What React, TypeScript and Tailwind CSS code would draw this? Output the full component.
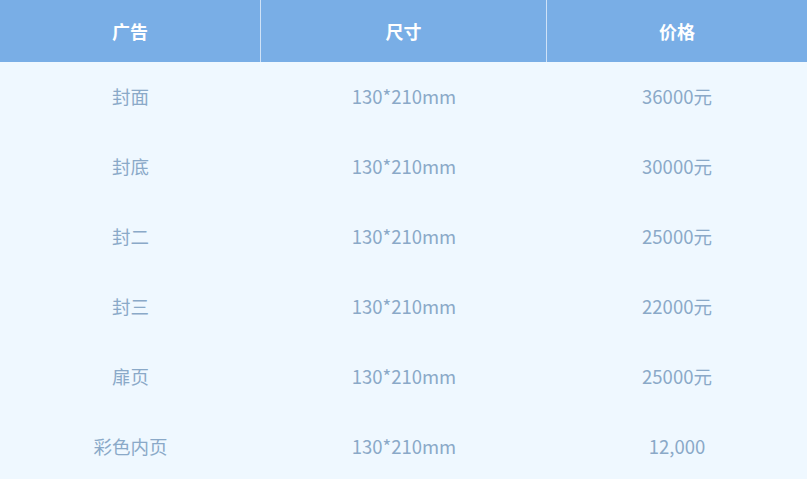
import React from "react";

const rows = [
  ["封面", "130*210mm", "36000元"],
  ["封底", "130*210mm", "30000元"],
  ["封二", "130*210mm", "25000元"],
  ["封三", "130*210mm", "22000元"],
  ["扉页", "130*210mm", "25000元"],
  ["彩色内页", "130*210mm", "12,000"],
];

export default function App() {
  return (
    <div
      className="w-[807px] h-[479px] bg-[#eff8ff] overflow-hidden"
      style={{ fontFamily: '"Noto Sans CJK SC", "Noto Sans", sans-serif' }}
    >
      <div className="grid grid-cols-[260px_1px_285px_1px_260px] h-[62px] bg-[#79aee6] text-white font-bold text-[18px]">
        <div className="flex items-center justify-center">广告</div>
        <div className="bg-[#cfe2f7]" />
        <div className="flex items-center justify-center">尺寸</div>
        <div className="bg-[#cfe2f7]" />
        <div className="flex items-center justify-center">价格</div>
      </div>
      {rows.map((r, i) => (
        <div
          key={i}
          className="grid grid-cols-[261px_286px_260px] h-[70px] text-[#8aa9c8] text-[18.5px]"
        >
          {r.map((c, j) => (
            <div key={j} className="flex items-center justify-center">
              {c}
            </div>
          ))}
        </div>
      ))}
    </div>
  );
}
